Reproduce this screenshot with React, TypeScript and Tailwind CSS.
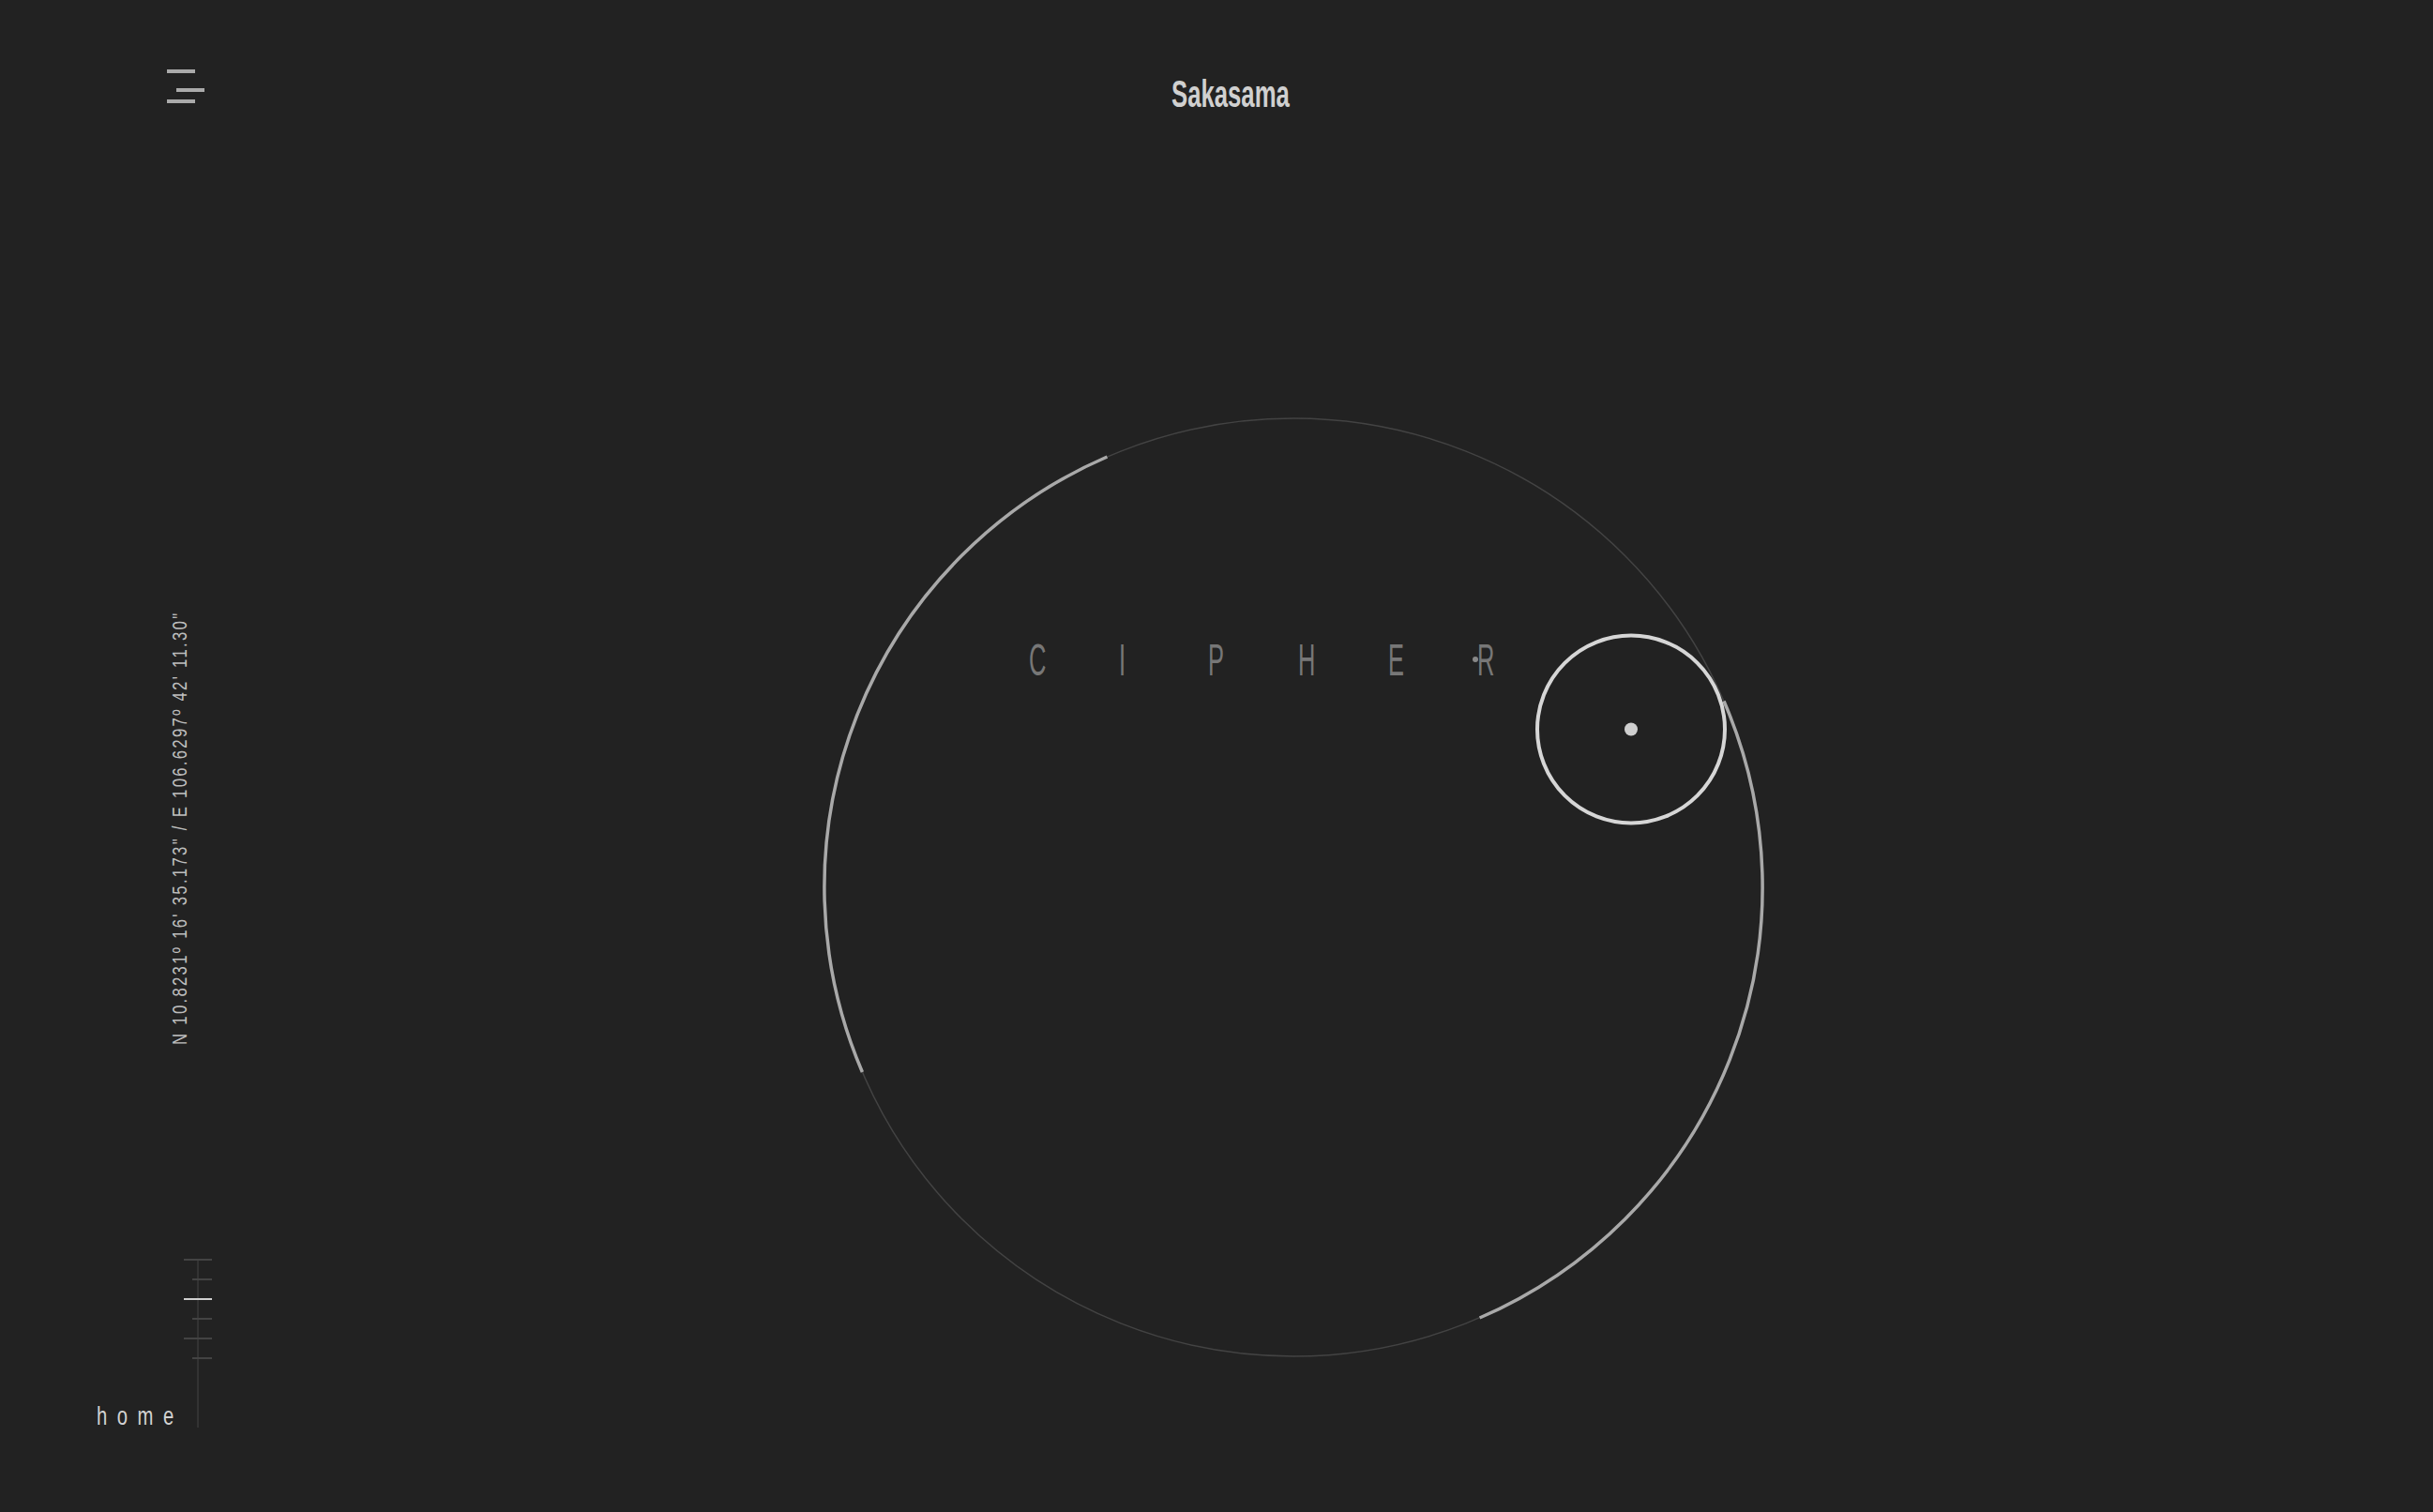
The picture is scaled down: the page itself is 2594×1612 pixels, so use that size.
import React from "react";

const letters = ["C", "I", "P", "H", "E", "R"];

function Scale() {
  const ticks = [
    { long: true, on: false },
    { long: false, on: false },
    { long: true, on: true },
    { long: false, on: false },
    { long: true, on: false },
    { long: false, on: false },
  ];
  return (
    <div className="relative w-[30px] h-[180px] flex flex-col items-end gap-[19px]">
      <div className="absolute left-[14px] top-0 w-[2px] h-[180px] bg-[#333333]" />
      {ticks.map((t, i) => (
        <div
          key={i}
          className={
            "relative h-[2px] " +
            (t.long ? "w-[30px] " : "w-[21px] ") +
            (t.on ? "bg-[#cfcfcf]" : "bg-[#434343]")
          }
        />
      ))}
    </div>
  );
}

function Orbit() {
  return (
    <div className="relative w-[1010px] h-[1010px]">
      <svg width="1010" height="1010" viewBox="0 0 1010 1010" className="block">
        <circle cx="505" cy="505" r="500" fill="none" stroke="#434343" strokeWidth="1.5" />
        <path d="M 45.4 702 A 500 500 0 0 1 306.4 46" fill="none" stroke="#a9a9a9" strokeWidth="3.5" />
        <path d="M 964 306.5 A 500 500 0 0 1 703.6 964" fill="none" stroke="#a9a9a9" strokeWidth="3.5" />
        <circle cx="865" cy="336.5" r="100" fill="none" stroke="#d6d6d6" strokeWidth="4" />
        <circle cx="865" cy="336.5" r="7" fill="#cfcfcf" />
      </svg>
      <div className="absolute left-[223px] top-[238px] flex text-[49px] leading-[49px] text-[#777777]">
        {letters.map((l) => (
          <span key={l} className="relative w-[95.7px]">
            <span className="inline-block scale-x-[0.52] origin-left">{l}</span>
            {l === "R" && (
              <span className="absolute left-[-5px] top-[21px] w-[6px] h-[6px] rounded-full bg-[#888888]" />
            )}
          </span>
        ))}
      </div>
    </div>
  );
}

export default function App() {
  return (
    <div className="w-[2594px] h-[1612px] bg-[#222222] flex overflow-hidden font-['Liberation_Sans',sans-serif]">
      <aside className="w-[260px] h-full flex flex-col shrink-0">
        <button className="mt-[74px] ml-[178px] w-[40px] flex flex-col items-start">
          <span className="block w-[30px] h-[4px] bg-[#aaaaaa]" />
          <span className="block w-[30px] h-[4px] mt-[16px] ml-[10px] bg-[#aaaaaa]" />
          <span className="block w-[30px] h-[4px] mt-[8px] bg-[#aaaaaa]" />
        </button>
        <div className="mt-[469px] ml-[181px] w-[22px] [writing-mode:vertical-rl] rotate-180 scale-y-[0.761] text-[22px] leading-[22px] tracking-[3px] text-[#bdbdbd] whitespace-nowrap">
          N 10.8231º 16' 35.173" / E 106.6297º 42' 11.30"
        </div>
        <div className="mt-auto mb-[90px] ml-[103px] flex items-end">
          <div className="w-[93px] mb-[-4px]">
            <span className="inline-block scale-x-[0.75] origin-left text-[27px] leading-[27px] tracking-[14px] text-[#d2d2d2] whitespace-nowrap">
              home
            </span>
          </div>
          <Scale />
        </div>
      </aside>
      <main className="flex-1 flex flex-col">
        <header className="mt-[80px] ml-[989px] h-[40px]">
          <span className="inline-block scale-x-[0.643] origin-left text-[40px] leading-[40px] font-bold text-[#d0d0d0] whitespace-nowrap">
            Sakasama
          </span>
        </header>
        <div className="mt-[321px] ml-[614px]">
          <Orbit />
        </div>
      </main>
    </div>
  );
}
